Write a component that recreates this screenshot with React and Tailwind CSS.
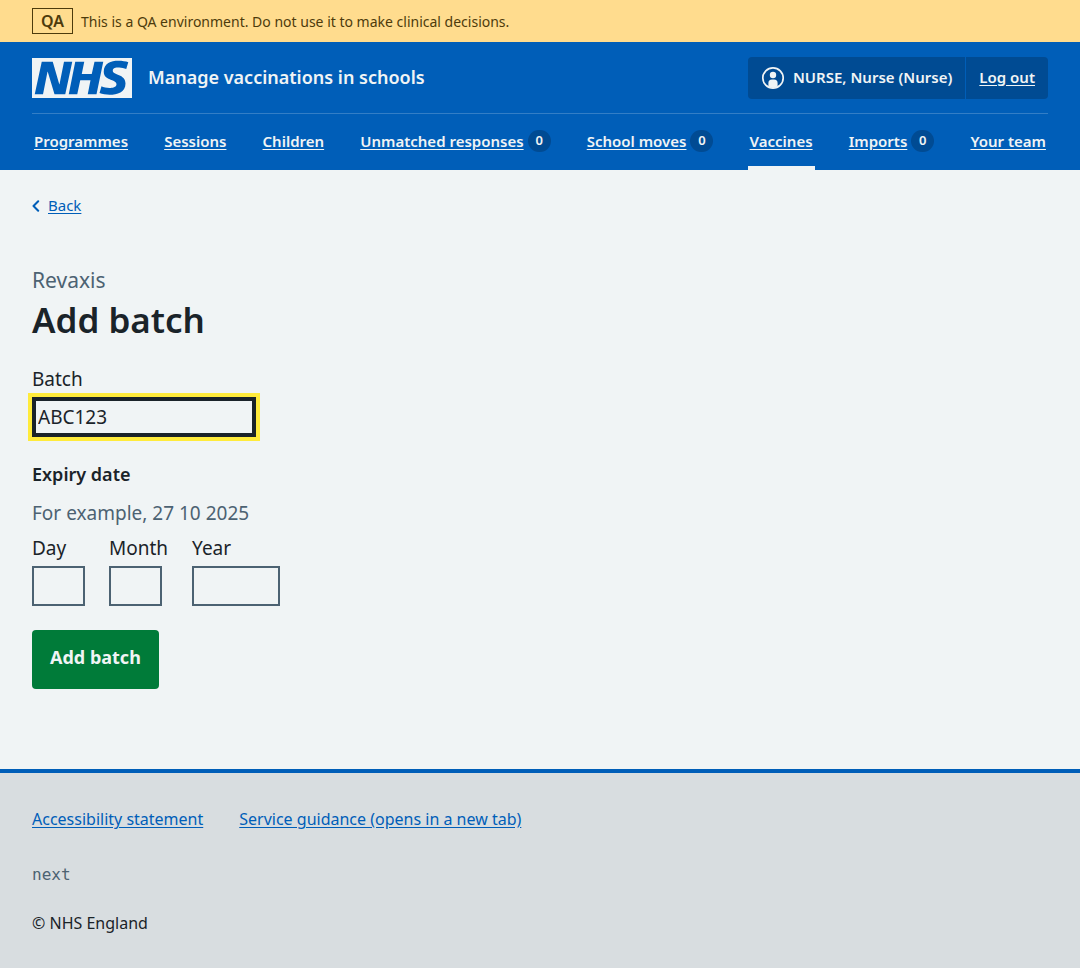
import React from "react";

const navItems = [
  { label: "Programmes" },
  { label: "Sessions" },
  { label: "Children" },
  { label: "Unmatched responses", count: 0 },
  { label: "School moves", count: 0 },
  { label: "Vaccines", current: true },
  { label: "Imports", count: 0 },
  { label: "Your team" },
];

function NhsLogo() {
  return (
    <svg className="h-10 w-[100px]" viewBox="0 0 200 80" role="img" aria-label="NHS">
      <path
        fill="#f0f4f5"
        d="M200 0v80H0V0h200Zm-27.5 5.5c-14.5 0-29 5-29 22 0 10.2 7.7 13.5 14.7 16.3l.7.3c5.4 2 10.1 3.9 10.1 8.4 0 6.5-8.5 7.5-14 7.5s-12.5-1.5-16-3.5L135 70c5.5 2 13.5 3.5 20 3.5 15.5 0 32-4.5 32-22.5 0-19.5-25.5-16.5-25.5-25.5 0-5.5 5.5-6.5 12.5-6.5a35 35 0 0 1 14.5 3l4-13.5c-4.5-2-12-3-20-3Zm-131 2h-22l-14 65H22l9-45h.5l13.5 45h21.5l14-65H64l-9 45h-.5l-13-45Zm63 0h-18l-13 65h17l6-28H117l-5.5 28H129l13.5-65H125L119.5 32h-20l5-24.5Z"
      />
    </svg>
  );
}

function UserIcon() {
  return (
    <svg className="size-6" viewBox="0 0 24 24" fill="currentColor" aria-hidden="true">
      <circle cx="12" cy="12" r="10.2" fill="none" stroke="currentColor" strokeWidth="1.7" />
      <circle cx="12" cy="9" r="3.2" />
      <path d="M7.4 20.6V17a3.6 3.6 0 0 1 3.6-3.6h2a3.6 3.6 0 0 1 3.6 3.6v3.6A10 10 0 0 1 12 22a10 10 0 0 1-4.6-1.4Z" />
    </svg>
  );
}

function DateField({ id, label, width }) {
  return (
    <div className="flex flex-col gap-1">
      <label htmlFor={id} className="text-[19px] leading-7">{label}</label>
      <input id={id} inputMode="numeric" className={`h-10 border-2 border-[#4c6272] px-1 outline-none ${width}`} />
    </div>
  );
}

export default function App() {
  return (
    <div className="flex min-h-screen flex-col bg-[#f0f4f5] font-['Noto_Sans','Open_Sans',sans-serif] text-[#1a2329]">
      <div className="flex h-[42px] items-center gap-2 bg-[#ffdc8e] px-8 text-[#4d3b0c]">
        <strong className="border border-[#4d3b0c] px-2 text-[16px] leading-6 font-semibold">QA</strong>
        <span className="text-[14px]">This is a QA environment. Do not use it to make clinical decisions.</span>
      </div>

      <header className="bg-[#005eb8] px-8 text-[#f0f4f5]">
        <div className="flex h-[72px] items-center justify-between border-b border-[#337ec6]">
          <a href="#home" className="flex items-center gap-4">
            <NhsLogo />
            <span className="text-[18px] font-semibold">Manage vaccinations in schools</span>
          </a>
          <div className="flex h-[42px] items-stretch rounded bg-[#004b93] text-[15px] font-semibold">
            <div className="flex items-center gap-2 border-r border-[#005eb8] px-[13px]">
              <UserIcon />
              <span>NURSE, Nurse (Nurse)</span>
            </div>
            <a href="#logout" className="flex items-center px-[13px] underline underline-offset-2">Log out</a>
          </div>
        </div>
        <nav className="flex h-14 justify-between">
          {navItems.map((item) => (
            <a
              key={item.label}
              href="#nav"
              className={`flex items-center gap-1 border-b-4 px-[2px] pt-[2px] text-[15px] font-semibold ${item.current ? "border-b-[#f0f4f5]" : "border-b-transparent"}`}
            >
              <span className="underline underline-offset-2">{item.label}</span>
              {item.count !== undefined && (
                <span className="flex h-[22px] w-[23px] items-center justify-center rounded-full bg-[#004b93] text-[13px] font-semibold">
                  {item.count}
                </span>
              )}
            </a>
          ))}
        </nav>
      </header>

      <main className="flex grow flex-col items-start px-8 pt-6">
        <a href="#back" className="flex items-center gap-2 text-[15px] leading-[22px] text-[#005eb8]">
          <svg className="h-[14px] w-2" viewBox="0 0 8 14" fill="none" stroke="currentColor" strokeWidth="2" strokeLinecap="round" strokeLinejoin="round" aria-hidden="true">
            <path d="M6.2 3.2 1.5 8l4.7 4.8" />
          </svg>
          <span className="underline underline-offset-2">Back</span>
        </a>

        <h1 className="mt-12 flex flex-col">
          <span className="text-[21px] leading-8 font-normal text-[#4c6272]">Revaxis</span>
          <span className="text-[35px] leading-12 font-semibold">Add batch</span>
        </h1>

        <form className="flex flex-col items-start" onSubmit={(e) => e.preventDefault()}>
          <label htmlFor="batch" className="mt-[21px] text-[19px] leading-7">Batch</label>
          <input
            id="batch"
            defaultValue="ABC123"
            className="mt-1 h-10 w-56 border-4 border-[#1a2329] px-[2px] text-[19px] ring-4 ring-[#ffeb3b] outline-none"
          />

          <fieldset className="mt-6">
            <legend className="text-[18px] leading-[26px] font-semibold">Expiry date</legend>
            <p className="mt-[14px] text-[19px] leading-6 text-[#4c6272]">For example, 27 10 2025</p>
            <div className="mt-[9px] flex gap-6">
              <DateField id="day" label="Day" width="w-[53px]" />
              <DateField id="month" label="Month" width="w-[53px]" />
              <DateField id="year" label="Year" width="w-[88px]" />
            </div>
          </fieldset>

          <button type="submit" className="mt-6 h-[59px] rounded bg-[#007b39] px-[18px] pb-1 text-[18px] font-bold text-[#f0f4f5]">
            Add batch
          </button>
        </form>
      </main>

      <footer className="border-t-4 border-[#005eb8] bg-[#d8dde0] px-8 pt-[34px] pb-[33px] text-[16px] leading-6">
        <div className="flex gap-9 text-[#005eb8]">
          <a href="#accessibility" className="underline underline-offset-2">Accessibility statement</a>
          <a href="#guidance" className="underline underline-offset-2">Service guidance (opens in a new tab)</a>
        </div>
        <p className="mt-8 font-['DejaVu_Sans_Mono',monospace] text-[#4c6272]">next</p>
        <p className="mt-6">© NHS England</p>
      </footer>
    </div>
  );
}
